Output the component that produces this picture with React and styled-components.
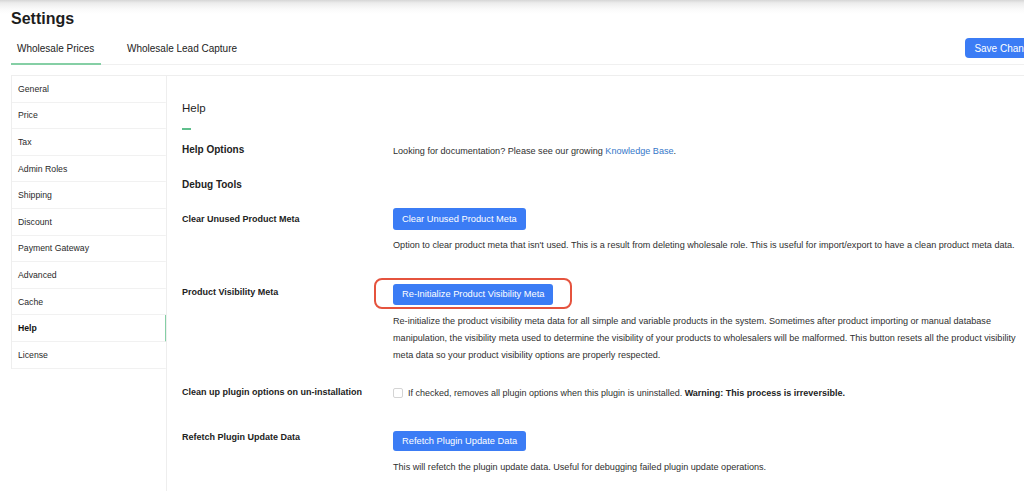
import React from 'react'
import styled, { createGlobalStyle } from 'styled-components'

const GlobalStyle = createGlobalStyle`
  html, body {
    margin: 0;
    padding: 0;
    background: #fff;
    overflow: hidden;
  }
  body {
    font-family: "Liberation Sans", Arial, sans-serif;
    color: #222;
  }
`

const Page = styled.div`
  width: 1060px;
  height: 491px;
  padding: 0 11px;
  box-sizing: border-box;
  background: linear-gradient(to bottom, #d6d6d6 0, #ececec 3px, #fafafa 9px, #fff 14px);
`

const Title = styled.h1`
  margin: 0;
  padding-top: 9px;
  font-size: 16px;
  line-height: 20px;
  font-weight: 700;
  color: #1d1d1d;
`

const TabBar = styled.div`
  display: flex;
  align-items: flex-end;
  justify-content: space-between;
  height: 35px;
  border-bottom: 1px solid #f0f0f0;
`

const Tabs = styled.div`
  display: flex;
  gap: 6px;
`

const Tab = styled.div`
  width: ${p => (p.$active ? '90px' : 'auto')};
  padding: 0 ${p => (p.$active ? '0' : '14px')} 0 ${p => (p.$active ? '6px' : '20px')};
  box-sizing: border-box;
  height: 30px;
  font-size: 10px;
  line-height: 28px;
  color: #222;
  border-bottom: 2px solid ${p => (p.$active ? '#85cfa5' : 'transparent')};
  margin-bottom: -1px;
`

const SaveButton = styled.button`
  align-self: flex-start;
  margin-top: 9px;
  height: 20px;
  padding: 0 9px;
  border: none;
  border-radius: 4px;
  background: #3b7cf5;
  color: #fff;
  font-family: inherit;
  font-size: 10px;
`

const Body = styled.div`
  display: flex;
  margin-top: 10px;
  border-top: 1px solid #eeeeee;
  height: 420px;
`

const Sidebar = styled.ul`
  list-style: none;
  margin: 0;
  padding: 0;
  width: 155px;
  flex-shrink: 0;
  align-self: flex-start;
  border-left: 1px solid #eeeeee;
  box-sizing: border-box;
`

const NavItem = styled.li`
  height: 26.6px;
  box-sizing: border-box;
  padding-left: 6px;
  display: flex;
  align-items: center;
  font-size: 8.7px;
  color: ${p => (p.$active ? '#111' : '#2a2a2a')};
  font-weight: ${p => (p.$active ? 700 : 400)};
  border-bottom: 1px solid #f1f1f1;
  border-right: 2px solid ${p => (p.$active ? '#85cfa5' : 'transparent')};
  margin-right: -1px;
`

const Main = styled.div`
  flex: 1;
  border-left: 1px solid #eeeeee;
  padding: 24px 0 0 15px;
`

const Heading = styled.h2`
  margin: 0;
  font-size: 11.5px;
  line-height: 16px;
  font-weight: 400;
  color: #1f1f1f;
`

const Accent = styled.div`
  width: 9px;
  height: 2px;
  background: #5fbf8c;
  margin-top: 12px;
`

const Row = styled.div`
  display: grid;
  grid-template-columns: 211px 632px;
  align-items: start;
  margin-top: ${p => p.$top}px;
`

const Label = styled.div`
  font-size: ${p => (p.$big ? '10px' : '9px')};
  font-weight: 700;
  line-height: ${p => (p.$big ? '14px' : '12px')};
  padding-top: ${p => p.$pad || 0}px;
  color: #222;
`

const Text = styled.p`
  margin: ${p => p.$top || 0}px 0 0;
  font-size: 9.1px;
  line-height: 17px;
  color: #2f2f2f;

  a {
    color: #3577c9;
    text-decoration: none;
  }
  b {
    color: #222;
  }
`

const Button = styled.button`
  height: ${p => p.$h || 22}px;
  padding: 0 9px;
  border: none;
  border-radius: 3px;
  background: #3b7cf5;
  color: #fff;
  font-family: inherit;
  font-size: 9.3px;
`

const Marked = styled.div`
  position: relative;
  display: inline-block;

  &::before {
    content: '';
    position: absolute;
    top: -5px;
    bottom: -4px;
    left: -19px;
    right: -19px;
    border: 2px solid #e5533e;
    border-radius: 8px;
  }
`

const CheckLine = styled.label`
  display: flex;
  align-items: center;
  gap: 5px;
  font-size: 9px;
  color: #2f2f2f;
  line-height: 14px;

  b {
    color: #222;
  }
`

const Box = styled.span`
  width: 10px;
  height: 10px;
  box-sizing: border-box;
  border: 1px solid #d4d4d4;
  border-radius: 2px;
  background: #fff;
`

const navItems = [
  'General', 'Price', 'Tax', 'Admin Roles', 'Shipping', 'Discount',
  'Payment Gateway', 'Advanced', 'Cache', 'Help', 'License'
]

export default function App() {
  return (
    <>
      <GlobalStyle />
      <Page>
        <Title>Settings</Title>
        <TabBar>
          <Tabs>
            <Tab $active>Wholesale Prices</Tab>
            <Tab>Wholesale Lead Capture</Tab>
          </Tabs>
          <SaveButton>Save Changes</SaveButton>
        </TabBar>
        <Body>
          <Sidebar>
            {navItems.map(item => (
              <NavItem key={item} $active={item === 'Help'}>{item}</NavItem>
            ))}
          </Sidebar>
          <Main>
            <Heading>Help</Heading>
            <Accent />
            <Row $top={13}>
              <Label $big>Help Options</Label>
              <Text $top={0}>
                Looking for documentation? Please see our growing <a href="#">Knowledge Base</a>.
              </Text>
            </Row>
            <Row $top={18}>
              <Label $big>Debug Tools</Label>
            </Row>
            <Row $top={16}>
              <Label $pad={5}>Clear Unused Product Meta</Label>
              <div>
                <Button>Clear Unused Product Meta</Button>
                <Text $top={7}>
                  Option to clear product meta that isn't used. This is a result from deleting wholesale role. This is useful for import/export to have a clean product meta data.
                </Text>
              </div>
            </Row>
            <Row $top={29}>
              <Label $pad={3}>Product Visibility Meta</Label>
              <div>
                <Marked>
                  <Button $h={21}>Re-Initialize Product Visibility Meta</Button>
                </Marked>
                <Text $top={8}>
                  Re-initialize the product visibility meta data for all simple and variable products in the system. Sometimes after product importing or manual database manipulation, the visibility meta used to determine the visibility of your products to wholesalers will be malformed. This button resets all the product visibility meta data so your product visibility options are properly respected.
                </Text>
              </div>
            </Row>
            <Row $top={22}>
              <Label>Clean up plugin options on un-installation</Label>
              <CheckLine>
                <Box />
                <span>If checked, removes all plugin options when this plugin is uninstalled. <b>Warning: This process is irreversible.</b></span>
              </CheckLine>
            </Row>
            <Row $top={30}>
              <Label $pad={1}>Refetch Plugin Update Data</Label>
              <div>
                <Button $h={20}>Refetch Plugin Update Data</Button>
                <Text $top={8}>
                  This will refetch the plugin update data. Useful for debugging failed plugin update operations.
                </Text>
              </div>
            </Row>
          </Main>
        </Body>
      </Page>
    </>
  )
}
